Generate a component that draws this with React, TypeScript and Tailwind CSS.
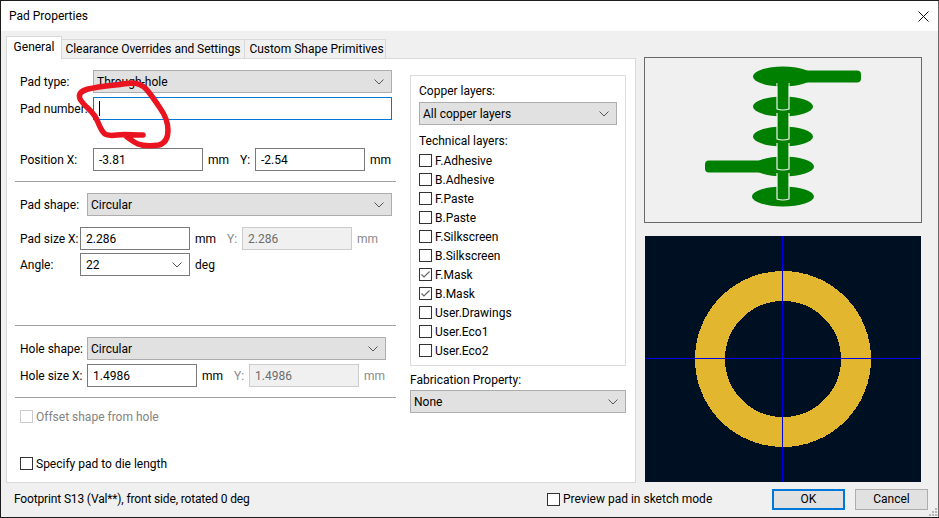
import type { ReactNode } from "react";

const layers = [
  { name: "F.Adhesive", on: false },
  { name: "B.Adhesive", on: false },
  { name: "F.Paste", on: false },
  { name: "B.Paste", on: false },
  { name: "F.Silkscreen", on: false },
  { name: "B.Silkscreen", on: false },
  { name: "F.Mask", on: true },
  { name: "B.Mask", on: true },
  { name: "User.Drawings", on: false },
  { name: "User.Eco1", on: false },
  { name: "User.Eco2", on: false },
];

function Chevron() {
  return (
    <svg width="10" height="6" viewBox="0 0 10 6" className="shrink-0">
      <path d="M0.5 0.5 L5 5 L9.5 0.5" fill="none" stroke="#555" strokeWidth="1" />
    </svg>
  );
}

function Select({ value, className }: { value: string; className: string }) {
  return (
    <div
      className={`h-[23px] flex items-center justify-between pl-[3px] pr-[7px] bg-[#e1e1e1] border border-[#adadad] ${className}`}
    >
      <span>{value}</span>
      <Chevron />
    </div>
  );
}

function Field({ value, disabled, children }: { value: string; disabled?: boolean; children?: ReactNode }) {
  return (
    <div
      className={`w-[110px] h-[23px] flex items-center justify-between pl-[5px] pr-[7px] border ${
        disabled ? "bg-[#f0f0f0] border-[#cccccc] text-[#6d6d6d]" : "bg-white border-[#7a7a7a]"
      }`}
    >
      <span>{value}</span>
      {children}
    </div>
  );
}

function Unit({ text, muted, className }: { text: string; muted?: boolean; className: string }) {
  return <span className={`${muted ? "text-[#8a8a8a]" : ""} ${className}`}>{text}</span>;
}

function Check({ on, disabled }: { on?: boolean; disabled?: boolean }) {
  return (
    <span
      className={`w-[13px] h-[13px] shrink-0 flex items-center justify-center border ${
        disabled ? "border-[#cccccc]" : "border-[#333333]"
      } bg-white`}
    >
      {on && (
        <svg width="11" height="11" viewBox="0 0 11 11">
          <path d="M1.5 5.5 L4 8 L9.5 2.5" fill="none" stroke="#666" strokeWidth="1.2" />
        </svg>
      )}
    </span>
  );
}

function Divider({ className }: { className: string }) {
  return <div className={`h-px w-[381px] -ml-[5px] bg-[#a0a0a0] ${className}`} />;
}

function Barrel({ y }: { y: number }) {
  return (
    <path
      d={`M777 ${y} V${y + 26} Q783 ${y + 28} 789 ${y + 26} V${y}`}
      fill="#008000"
      stroke="#f4f4f4"
      strokeWidth="1.2"
    />
  );
}

function StackPreview() {
  return (
    <svg width="276" height="164" viewBox="645 58 276 164">
      <ellipse cx="783" cy="76.5" rx="30" ry="10" fill="#008000" />
      <rect x="790" y="70.5" width="71" height="12" rx="4" fill="#008000" />
      <ellipse cx="783" cy="106.5" rx="30" ry="10" fill="#008000" />
      <ellipse cx="783" cy="136.5" rx="30" ry="10" fill="#008000" />
      <ellipse cx="783.5" cy="166.5" rx="30.5" ry="10" fill="#008000" />
      <rect x="705" y="160.5" width="70" height="12" rx="4" fill="#008000" />
      <ellipse cx="783" cy="196.5" rx="31" ry="10" fill="#008000" />
      <Barrel y={83} />
      <Barrel y={113} />
      <Barrel y={143} />
      <Barrel y={173} />
      <rect x="777.6" y="80" width="10.8" height="6" fill="#008000" />
    </svg>
  );
}

function PadPreview() {
  return (
    <svg width="276" height="246" viewBox="0 0 276 246" shapeRendering="crispEdges">
      <rect width="276" height="246" fill="#001023" />
      <circle cx="138" cy="123" r="73" fill="none" stroke="#e2b72f" strokeWidth="30" />
      <path d="M137.5 0 V246 M0 122.5 H276" stroke="#0000e6" strokeWidth="1" />
    </svg>
  );
}

export default function App() {
  return (
    <div className="relative w-[939px] h-[518px] bg-[#1c1c1c] pt-px pl-px pb-px overflow-hidden font-['Roboto',sans-serif] text-[12px] leading-[16px] text-black">
      <div className="h-full flex flex-col bg-[#f0f0f0] border-r border-[#696969]">
        {/* title bar */}
        <div className="h-[30px] shrink-0 bg-white flex items-center justify-between pl-[8px] pr-[9px]">
          <span>Pad Properties</span>
          <svg width="11" height="11" viewBox="0 0 11 11">
            <path d="M0.5 0.5 L10.5 10.5 M10.5 0.5 L0.5 10.5" stroke="#111" strokeWidth="1" />
          </svg>
        </div>

        <div className="flex pl-[5px] pt-[5px] h-[452px] shrink-0">
          <div className="w-[630px] flex flex-col">
            {/* tabs */}
            <div className="h-[23px] flex items-end relative z-10 -mb-px whitespace-nowrap">
              <div className="w-[56px] h-[23px] bg-white border border-b-0 border-[#d9d9d9] flex items-center justify-center pb-[2px]">
                General
              </div>
              <div className="w-[183px] h-[20px] bg-[#f0f0f0] border border-l-0 border-[#d9d9d9] flex items-center justify-center tracking-[-0.05px]">
                Clearance Overrides and Settings
              </div>
              <div className="w-[141px] h-[20px] bg-[#f0f0f0] border border-l-0 border-[#d9d9d9] flex items-center justify-center pl-[3px]">
                Custom Shape Primitives
              </div>
            </div>

            {/* panel */}
            <div className="h-[425px] bg-white border border-[#d9d9d9] flex">
              <div className="w-[403px] shrink-0 pl-[13px] pt-[11px]">
                <div className="flex items-center h-[23px]">
                  <span className="w-[73px]">Pad type:</span>
                  <Select value="Through-hole" className="w-[299px]" />
                </div>
                <div className="flex items-center h-[23px] mt-[4px]">
                  <span className="w-[73px]">Pad number:</span>
                  <div className="w-[299px] h-[23px] bg-white border border-[#0078d7] flex items-center pl-[5px]">
                    <span className="w-px h-[15px] bg-black" />
                  </div>
                </div>
                <div className="flex items-center h-[23px] mt-[28px]">
                  <span className="w-[73px]">Position X:</span>
                  <Field value="-3.81" />
                  <Unit text="mm" className="w-[32px] pl-[5px]" />
                  <span className="w-[20px] pl-[5px]">Y:</span>
                  <Field value="-2.54" />
                  <Unit text="mm" className="pl-[5px]" />
                </div>
                <Divider className="mt-[10px]" />

                <div className="flex items-center h-[23px] mt-[11px]">
                  <span className="w-[67px]">Pad shape:</span>
                  <Select value="Circular" className="w-[305px]" />
                </div>
                <div className="flex items-center h-[23px] mt-[11px]">
                  <span className="w-[60px]">Pad size X:</span>
                  <Field value="2.286" />
                  <Unit text="mm" className="w-[32px] pl-[5px]" />
                  <span className="w-[20px] pl-[5px] text-[#8a8a8a]">Y:</span>
                  <Field value="2.286" disabled />
                  <Unit text="mm" muted className="pl-[5px]" />
                </div>
                <div className="flex items-center h-[23px] mt-[3px]">
                  <span className="w-[60px]">Angle:</span>
                  <Field value="22">
                    <Chevron />
                  </Field>
                  <Unit text="deg" className="pl-[5px]" />
                </div>
                <Divider className="mt-[49px]" />

                <div className="flex items-center h-[23px] mt-[11px]">
                  <span className="w-[67px]">Hole shape:</span>
                  <Select value="Circular" className="w-[299px]" />
                </div>
                <div className="flex items-center h-[23px] mt-[4px]">
                  <span className="w-[67px]">Hole size X:</span>
                  <Field value="1.4986" />
                  <Unit text="mm" className="w-[32px] pl-[5px]" />
                  <span className="w-[20px] pl-[5px] text-[#8a8a8a]">Y:</span>
                  <Field value="1.4986" disabled />
                  <Unit text="mm" muted className="pl-[5px]" />
                </div>
                <Divider className="mt-[10px]" />

                <div className="flex items-center h-[13px] mt-[12px] gap-[3px] text-[#838383]">
                  <Check disabled />
                  <span>Offset shape from hole</span>
                </div>
                <div className="flex items-center h-[13px] mt-[34px] gap-[3px]">
                  <Check />
                  <span>Specify pad to die length</span>
                </div>
              </div>

              <div className="w-[216px] shrink-0 pt-[16px]">
                <div className="h-[291px] border border-[#dcdcdc] pl-[8px] pt-[7px]">
                  <div>Copper layers:</div>
                  <Select value="All copper layers" className="w-[198px] mt-[3px]" />
                  <div className="mt-[8px]">Technical layers:</div>
                  <div className="mt-[2px] flex flex-col">
                    {layers.map((l) => (
                      <div key={l.name} className="h-[19px] flex items-center gap-[3px]">
                        <Check on={l.on} />
                        <span>{l.name}</span>
                      </div>
                    ))}
                  </div>
                </div>
                <div className="mt-[6px]">Fabrication Property:</div>
                <Select value="None" className="w-[216px] mt-[2px]" />
              </div>
            </div>
          </div>

          {/* previews */}
          <div className="ml-[8px] pt-[21px]">
            <div className="w-[278px] h-[166px] border border-[#696969]">
              <StackPreview />
            </div>
            <div className="ml-px mt-[13px] w-[276px] h-[246px]">
              <PadPreview />
            </div>
          </div>
        </div>

        {/* footer */}
        <div className="flex-1 flex items-center pl-[13px] pb-[2px]">
          <span className="w-[533px] tracking-[-0.15px]">Footprint S13 (Val**), front side, rotated 0 deg</span>
          <div className="w-[225px] flex items-center gap-[3px]">
            <Check />
            <span>Preview pad in sketch mode</span>
          </div>
          <button className="w-[73px] h-[21px] bg-[#e1e1e1] border-2 border-[#0078d7] flex items-center justify-center">
            OK
          </button>
          <button className="w-[73px] h-[21px] ml-[10px] bg-[#e1e1e1] border border-[#adadad] flex items-center justify-center">
            Cancel
          </button>
        </div>
      </div>

      {/* resize grip */}
      <svg className="absolute left-[928px] top-[507px]" width="10" height="10" viewBox="0 0 10 10">
        <path d="M7 1h2v2h-2z M4 4h2v2h-2z M7 4h2v2h-2z M1 7h2v2h-2z M4 7h2v2h-2z M7 7h2v2h-2z" fill="#b5b5b5" />
      </svg>

      {/* red marker scribble over the pad number field */}
      <svg className="absolute left-0 top-0 pointer-events-none" width="939" height="518" viewBox="0 0 939 518">
        <path
          d="M143 135 C132 135 124 134 117 135 C110 136 105 135 103 132 C99 127 98 120 94 115 C90 109 84 106 80 99 C78 94 81 91 88 89 C100 86 118 85 131 83 C138 83 143 85 147 90 C152 96 156 102 160 108 C165 115 168 122 168 130 C168 137 166 143 159 145 C151 146 143 146 138 144 C133 142 130 139 127 137"
          fill="none"
          stroke="#e9141f"
          strokeWidth="5.5"
          strokeLinecap="round"
          strokeLinejoin="round"
        />
      </svg>
    </div>
  );
}
